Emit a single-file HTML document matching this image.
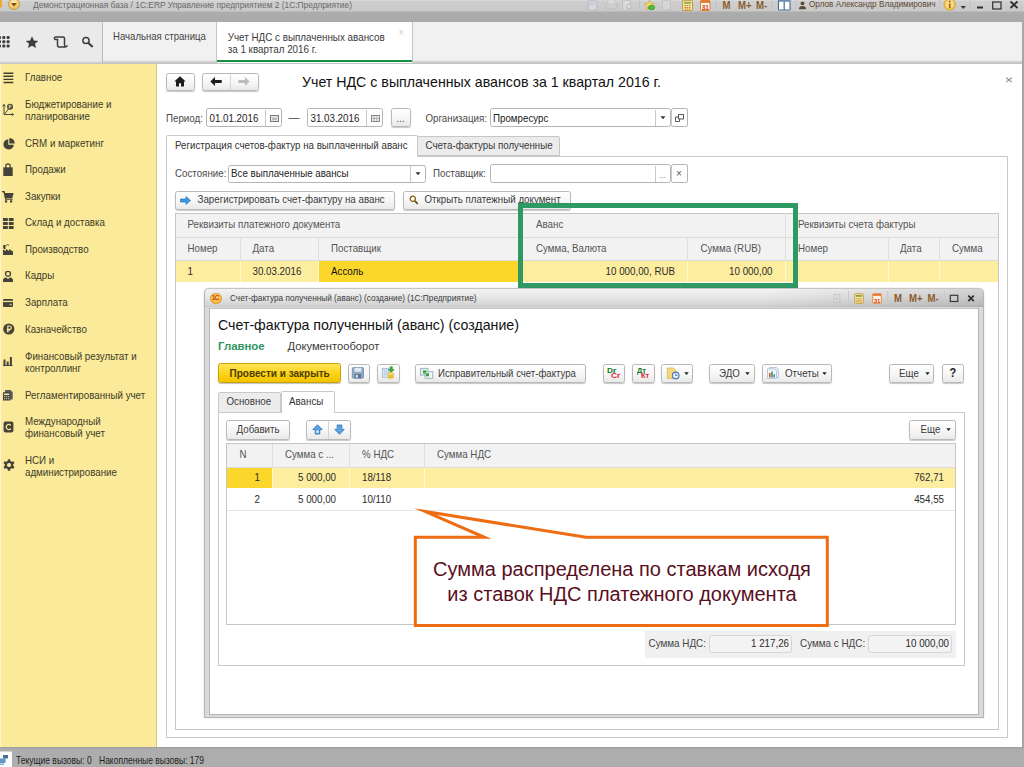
<!DOCTYPE html>
<html lang="ru"><head><meta charset="utf-8"><title>Учет НДС с выплаченных авансов</title>
<style>
*{box-sizing:border-box;margin:0;padding:0}
html,body{width:1024px;height:767px;overflow:hidden;background:#fff}
body{position:relative;font-family:"Liberation Sans",sans-serif;font-size:9.75px;color:#3a3a3a;line-height:12px}
.a{position:absolute;white-space:nowrap}
.btn{position:absolute;border:1px solid #b9b9b9;border-radius:2.5px;background:linear-gradient(#ffffff,#f6f6f6 55%,#e9e9e9);box-shadow:0 1px 1px rgba(0,0,0,.22);white-space:nowrap}
.inp{position:absolute;border:1px solid #b5b5b5;border-radius:2.5px;background:#fff;white-space:nowrap}
.hl{position:absolute;height:1px;background:#c8c8c8}
.vl{position:absolute;width:1px;background:#c8c8c8}
.nav{position:absolute;left:25px;color:#403c28;white-space:nowrap;line-height:11.400px}
.ico{position:absolute}
.th{position:absolute;color:#555;white-space:nowrap}
.td{position:absolute;color:#2a2a2a;white-space:nowrap}
.tb{font-size:8.3px;color:#5a5a5a}
.t{transform:scaleY(1.1)}
</style></head><body>

<!-- ===== window title bar ===== -->
<div class="a" id="titlebar" style="left:0;top:0;width:1024px;height:22px;background:linear-gradient(#dcdcdc 0,#cfcfcf 1.500px,#c9c9c9 10.800px,#acacac 12.300px,#aaaaaa 100%)"></div>
<div class="a" style="left:8px;top:-2px;width:12px;height:12px;border-radius:6px;background:radial-gradient(circle at 50% 35%,#fff3c4,#f5c866 60%,#d9a441);border:1px solid #c9a050"></div>
<svg class="ico" style="left:11px;top:3px" width="6" height="4"><path d="M0 0h6l-3 3.5z" fill="#8a4a10"/></svg>
<div class="a" style="left:-3px;top:-2px;width:5px;height:10px;background:#f0a830;border-radius:3px"></div>
<div class="a tb t" style="left:33px;top:-1px;font-size:8.4px;color:#6a6a6a">Демонстрационная база / 1C:ERP Управление предприятием 2  (1С:Предприятие)</div>
<!-- title bar icons -->
<svg class="ico" style="left:586px;top:0" width="90" height="12" viewBox="586 0 90 12">
<g opacity=".55"><rect x="587.500" y=".5" width="10" height="9.500" rx="1" fill="#c9cfd8" stroke="#aeb6c2"/><rect x="589.500" y="5.500" width="6" height="4" fill="#e3e6ea"/>
<rect x="606" y="3" width="11" height="6" rx="1" fill="#d0d0d0" stroke="#b4b4b4"/><rect x="608" y="0" width="7" height="4" fill="#e6e6e6" stroke="#bcbcbc" stroke-width=".6"/>
<rect x="622.500" y=".5" width="8" height="9.500" fill="#e4e4e4" stroke="#b8b8b8"/><circle cx="629" cy="6.500" r="2.300" fill="#eee" stroke="#aaa"/>
<rect x="662.500" y=".5" width="8" height="9.500" fill="#dedede" stroke="#bcbcbc"/></g>
<path d="M639.500 0v11M677 0v11" stroke="#c4c4c4" stroke-width="1"/>
<path d="M649.500 0l1.600 3.300 3.600.5-2.600 2.500.6 3.600-3.200-1.700-3.200 1.700.6-3.600-2.600-2.500 3.600-.5z" fill="#f6d66a" stroke="#c9a23a" stroke-width=".6"/>
<ellipse cx="651.500" cy="7.500" rx="3.200" ry="2.200" fill="#4cba3c" stroke="#2f8a26" stroke-width=".6"/>
</svg>
<svg class="ico" style="left:680px;top:0" width="40" height="12" viewBox="680 0 40 12">
<rect x="682.500" y=".3" width="10" height="10.200" rx=".8" fill="#f5e3a6" stroke="#c79a3a"/><rect x="684" y="1.800" width="7" height="2" fill="#8fb04a"/><path d="M684.500 5.500h6M684.500 7.500h6M684.500 9h6" stroke="#b4772a" stroke-width=".9" stroke-dasharray="1.500 .7"/>
<rect x="700.500" y=".8" width="9.500" height="9.700" rx=".8" fill="#fff6e8" stroke="#d9892a"/><rect x="700.500" y=".3" width="9.500" height="2.500" fill="#e8742a"/><text x="705.300" y="9.600" text-anchor="middle" font-family="Liberation Sans, sans-serif" font-size="6.500" font-weight="700" fill="#d23a1a">31</text>
<path d="M716 0v11" stroke="#c4c4c4" stroke-width="1"/>
</svg>
<div class="a t" style="left:722.500px;top:-.400px;font-size:9.600px;font-weight:700;color:#8b5a2b">M</div>
<div class="a t" style="left:738px;top:-.400px;font-size:9.600px;font-weight:700;color:#8b5a2b">M+</div>
<div class="a t" style="left:756px;top:-.400px;font-size:9.600px;font-weight:700;color:#8b5a2b">M-</div>
<svg class="ico" style="left:770px;top:0" width="254" height="14" viewBox="770 0 254 14">
<path d="M772 0v11M796 0v11M940 0v11M970 0v11" stroke="#c4c4c4" stroke-width="1"/>
<rect x="778.500" y=".3" width="11.500" height="9.700" rx=".8" fill="#fff" stroke="#4a6a94" stroke-width="1.100"/><path d="M784.200 .5v9.500" stroke="#4a6a94" stroke-width="1.200"/><rect x="779" y=".3" width="10.500" height="1.500" fill="#6f8fb8"/>
<circle cx="802.500" cy="3.300" r="1.900" fill="#5a4a3a"/><path d="M799 9.300q0-3.300 3.500-3.300t3.500 3.300z" fill="#5a4a3a"/>
<circle cx="949.700" cy="4.500" r="5.700" fill="#f3c44a" stroke="#c9973a" stroke-width=".8"/><circle cx="949.700" cy="4" r="4" fill="#fbe7a0" opacity=".7"/><rect x="948.900" y="3.500" width="1.700" height="4.500" fill="#a0661a"/><circle cx="949.700" cy="1.600" r="1" fill="#a0661a"/>
<path d="M960.500 6h5.500l-2.750 3z" fill="#3a3a3a"/>
<rect x="977" y="6.500" width="6" height="2" fill="#2e2e2e"/>
<rect x="992.700" y="2" width="8.300" height="7" fill="none" stroke="#3a3a3a" stroke-width="1.300"/>
<path d="M1010.500 1.500l7 6.500M1017.500 1.500l-7 6.500" stroke="#2e2e2e" stroke-width="1.800"/>
</svg>
<div class="a tb t" style="left:809px;top:-1px;font-size:8.200px;color:#5d4a33">Орлов Александр Владимирович</div>


<!-- ===== toolbar / tabs ===== -->
<div class="a" style="left:0;top:21.500px;width:1024px;height:42px;background:linear-gradient(#eaeaea 0,#eaeaea 92%,#d2d2d2 97%,#bdbdbd 100%)"></div>
<div class="a" style="left:102px;top:21.500px;width:922px;height:41.500px;background:linear-gradient(#f1f1f1 0,#f1f1f1 92%,#d6d6d6 97%,#bdbdbd 100%);border-left:1px solid #bcbcbc"></div>
<div class="a" style="left:216px;top:21.500px;width:197px;height:41px;background:#fff;border-left:1px solid #c4c4c4;border-right:1px solid #c4c4c4"></div>
<div class="a" style="left:217px;top:59.700px;width:195px;height:2.100px;background:#15913f"></div>
<div class="a t" style="left:113px;top:30.800px;font-size:9.600px;color:#454545">Начальная страница</div>
<div class="a t" style="left:227.700px;top:32.800px;font-size:9.850px;color:#3c3c3c;line-height:10.800px">Учет НДС с выплаченных авансов<br>за 1 квартал 2016 г.</div>
<div class="a t" style="left:398.500px;top:26.500px;font-size:9.500px;color:#cfcfcf">×</div>
<!-- left toolbar icons -->
<svg class="ico" style="left:0;top:34px" width="100" height="16" viewBox="0 34 100 16">
<g fill="#3c3c42"><rect x="-2" y="36" width="3" height="3" rx="1"/><rect x="2.300" y="36" width="3" height="3" rx="1"/><rect x="6.600" y="36" width="3" height="3" rx="1"/><rect x="-2" y="40.200" width="3" height="3" rx="1"/><rect x="2.300" y="40.200" width="3" height="3" rx="1"/><rect x="6.600" y="40.200" width="3" height="3" rx="1"/><rect x="-2" y="44.400" width="3" height="3" rx="1"/><rect x="2.300" y="44.400" width="3" height="3" rx="1"/><rect x="6.600" y="44.400" width="3" height="3" rx="1"/></g>
<path d="M32 36.300l1.900 4.100 4.400.5-3.300 2.900 1 4.300-4-2.300-4 2.300 1-4.300-3.300-2.900 4.400-.5z" fill="#3c3c42"/>
<path d="M55.500 37h7.500q1.500 0 1.500 1.500v6.500q0 1.700 1.300 1.700t1.300-1.500M55.500 37q-1.200 0-1.200 1.300t1.200 1.300h2v5.700q0 1.800 1.600 1.800h6.500" fill="none" stroke="#3c3c42" stroke-width="1.500"/>
<circle cx="86" cy="40.500" r="3.100" fill="none" stroke="#3c3c42" stroke-width="1.500"/><path d="M88.400 43l4.300 4" stroke="#3c3c42" stroke-width="2.100"/>
</svg>


<!-- ===== sidebar ===== -->
<div class="a" style="left:0;top:63.500px;width:157px;height:684px;background:#fbea9a;border-right:1px solid #d2c683"></div>
<div class="nav t" style="top:72.100px">Главное</div>
<div class="nav t" style="top:98.800px">Бюджетирование и<br>планирование</div>
<div class="nav t" style="top:137.800px">CRM и маркетинг</div>
<div class="nav t" style="top:164.100px">Продажи</div>
<div class="nav t" style="top:190.600px">Закупки</div>
<div class="nav t" style="top:217.400px">Склад и доставка</div>
<div class="nav t" style="top:244.000px">Производство</div>
<div class="nav t" style="top:270.200px">Кадры</div>
<div class="nav t" style="top:297.300px">Зарплата</div>
<div class="nav t" style="top:323.900px">Казначейство</div>
<div class="nav t" style="top:350.800px">Финансовый результат и<br>контроллинг</div>
<div class="nav t" style="top:389.600px">Регламентированный учет</div>
<div class="nav t" style="top:416.400px">Международный<br>финансовый учет</div>
<div class="nav t" style="top:455.000px">НСИ и<br>администрирование</div>
<div class="a" style="left:0;top:63.500px;width:1px;height:683px;background:#fdf6cf"></div>
<!-- nav icons -->
<svg class="ico" style="left:2.500px;top:71.500px" width="11" height="12" viewBox="0 0 11 12"><path d="M.5 .5h9.800v1.400H.5zM.5 3.600h9.800v1.400H.5zM.5 6.700h9.800v1.400H.5zM.5 9.800h9.800v1.400H.5z" fill="#403d2c"/></svg>
<svg class="ico" style="left:2px;top:102.500px" width="12" height="14" viewBox="0 0 12 14"><path d="M2 1.500V11.500H11.500M2 1.500 .7 3.300M2 1.500 3.300 3.300M11.500 11.500 9.800 10.300M11.500 11.500 9.800 12.700M2.500 11 6.500 6" fill="none" stroke="#48463c" stroke-width="1"/><circle cx="8" cy="3.800" r="3" fill="#48463c"/><path d="M7.200 5.500V2.300h1.100a.9.900 0 010 1.800H7.200" fill="none" stroke="#fbea99" stroke-width=".8"/></svg>
<svg class="ico" style="left:2.500px;top:137.500px" width="12" height="12" viewBox="0 0 12 12"><path d="M5.300 1.200A5.200 5.200 0 1 0 10.800 6.700H5.300z" fill="#44423a"/><path d="M6.400 0A5.300 5.300 0 0 1 11.700 5.500H6.400z" fill="#44423a"/></svg>
<svg class="ico" style="left:3px;top:162.500px" width="10" height="13" viewBox="0 0 10 13"><path d="M.3 4.300h9.400V13H.3z" fill="#44423a"/><path d="M2.800 5V3a2.200 2.200 0 0 1 4.400 0V5" fill="none" stroke="#44423a" stroke-width="1.200"/></svg>
<svg class="ico" style="left:2px;top:190.500px" width="12" height="12" viewBox="0 0 12 12"><path d="M0 .6h2l.6 1.500h9L10.300 7H3.300L2 1.700" fill="#44423a"/><path d="M0 .7h2.100l1.500 7.500h7" fill="none" stroke="#44423a" stroke-width="1.200"/><rect x="3" y="9.300" width="2.200" height="2.200" fill="#44423a"/><rect x="8" y="9.300" width="2.200" height="2.200" fill="#44423a"/></svg>
<svg class="ico" style="left:2.500px;top:217.500px" width="11" height="11" viewBox="0 0 11 11"><path d="M0 0h4.800v3H0zM5.800 0h4.800v3H5.800zM0 4h4.800v3H0zM5.800 4h4.800v3H5.800zM0 8h4.800v3H0zM5.800 8h4.800v3H5.800z" fill="#44423a"/></svg>
<svg class="ico" style="left:3px;top:243.500px" width="10" height="11" viewBox="0 0 10 11"><path d="M0 11V5.500L3 7V5l3 2V5l4 2.500V11z" fill="#44423a"/><path d="M.2 4.500V1h2.300v4.500z" fill="#44423a"/><path d="M3 2 4.500.3 6 1.500" fill="none" stroke="#44423a" stroke-width=".9"/></svg>
<svg class="ico" style="left:3px;top:271px" width="10" height="11" viewBox="0 0 10 11"><circle cx="5" cy="2.800" r="2.500" fill="none" stroke="#44423a" stroke-width="1.300"/><path d="M0 11V9.500Q0 6.800 3 6.500L5 8 7 6.500Q10 6.800 10 9.500V11z" fill="#44423a"/></svg>
<svg class="ico" style="left:3px;top:298.500px" width="10" height="8" viewBox="0 0 10 8"><rect x="0" y="0" width="10" height="8" rx="1" fill="#44423a"/><rect x="0" y="1.800" width="10" height="1.300" fill="#fbea99"/><rect x="6.500" y="4.800" width="2.300" height="1.500" fill="#fbea99" opacity=".7"/></svg>
<svg class="ico" style="left:2.500px;top:322.500px" width="12" height="12" viewBox="0 0 12 12"><circle cx="5.800" cy="6" r="5.600" fill="#44423a"/><path d="M4.800 9.500V3h1.800a1.700 1.700 0 010 3.400H3.800M3.800 7.800h3" fill="none" stroke="#fbea99" stroke-width="1.100"/></svg>
<svg class="ico" style="left:3px;top:356.300px" width="10" height="10" viewBox="0 0 10 10"><path d="M0 9h9.500v1H0zM.5 3.500h2V9h-2zM3.700 5.500h2V9h-2zM6.900 1h2v8h-2z" fill="#44423a"/></svg>
<svg class="ico" style="left:3px;top:389.500px" width="10" height="11" viewBox="0 0 10 11"><path d="M2 0h5.500L9.700 2.200v7.300H2z" fill="#5a5a60"/><path d="M0 2.300h7.300v8.200H0z" fill="#3f3f45"/><path d="M1 3.500h5.300v1.600H1z" fill="#fbea99"/><path d="M1 6.300h1.300v1H1zM3 6.300h1.300v1H3zM5 6.300h1.300v1H5zM1 8.300h1.300v1H1zM3 8.300h1.300v1H3zM5 8.300h1.300v1H5z" fill="#fbea99" opacity=".85"/></svg>
<svg class="ico" style="left:2.500px;top:421px" width="11" height="12" viewBox="0 0 11 12"><rect x=".6" y=".6" width="9.800" height="10.800" rx="1.800" fill="#44423a"/><path d="M7.800 4.300A2.600 2.600 0 1 0 7.800 7.700" fill="none" stroke="#fbea99" stroke-width="1.300"/></svg>
<svg class="ico" style="left:2.500px;top:459.300px" width="12" height="12" viewBox="0 0 12 12"><g fill="#44423a"><circle cx="6" cy="6" r="4.300"/><rect x="4.800" y=".3" width="2.400" height="11.400" rx=".5"/><rect x="4.800" y=".3" width="2.400" height="11.400" rx=".5" transform="rotate(60 6 6)"/><rect x="4.800" y=".3" width="2.400" height="11.400" rx=".5" transform="rotate(120 6 6)"/></g><circle cx="6" cy="6" r="2.100" fill="#fbea99"/></svg>


<!-- ===== content frame ===== -->
<div class="a" style="left:157px;top:63.500px;width:865px;height:684px;background:#fff"></div>
<div class="a" style="left:1022px;top:21px;width:2px;height:746px;background:#a6a6a6"></div>

<!-- ===== main form ===== -->
<div class="btn" style="left:166px;top:72.5px;width:28.5px;height:18.5px"></div>
<svg class="ico" style="left:174px;top:76px" width="12" height="11" viewBox="0 0 12 11"><path d="M6 0.3 0.3 5.6h1.7v5h3V7.3h2v3.3h3v-5h1.7z" fill="#1c1c1c"/></svg>
<div class="btn" style="left:202px;top:72.5px;width:56.5px;height:18.5px"></div>
<div class="vl" style="left:230px;top:73.5px;height:16.5px;background:#d4d4d4"></div>
<svg class="ico" style="left:210px;top:77px" width="12" height="9" viewBox="0 0 12 9"><path d="M5 0 0.3 4.5 5 9V6h6.7V3H5z" fill="#1c1c1c"/></svg>
<svg class="ico" style="left:238px;top:77px" width="12" height="9" viewBox="0 0 12 9"><path d="M7 0 11.7 4.5 7 9V6H0.3V3H7z" fill="#bdbdbd"/></svg>
<div class="a" style="left:302px;top:74.300px;font-size:14.200px;line-height:17px;color:#111">Учет НДС с выплаченных авансов за 1 квартал 2016 г.</div>
<svg class="ico" style="left:1005px;top:76px" width="8" height="8" viewBox="0 0 8 8"><path d="M1.200 1.700l5.600 4.400M6.800 1.700l-5.600 4.400" stroke="#8e8e8e" stroke-width="1.100"/></svg>

<div class="a t" style="left:166px;top:112.5px;color:#4a4a4a">Период:</div>
<div class="inp" style="left:206px;top:108.300px;width:75.500px;height:19.200px"></div>
<div class="vl" style="left:265px;top:109.5px;height:16.5px"></div>
<div class="a t" style="left:209.5px;top:112.5px;color:#222">01.01.2016</div>
<svg class="ico" style="left:269.5px;top:115px" width="9" height="7" viewBox="0 0 9 7"><rect x=".5" y=".5" width="8" height="6" fill="#e6e6e6" stroke="#777"/><rect x="2" y="2.5" width="5" height="2.5" fill="#bbb"/></svg>
<div class="a t" style="left:288.5px;top:112px;color:#666;font-size:11px">—</div>
<div class="inp" style="left:307px;top:108.300px;width:75.500px;height:19.200px"></div>
<div class="vl" style="left:366px;top:109.5px;height:16.5px"></div>
<div class="a t" style="left:310.5px;top:112.5px;color:#222">31.03.2016</div>
<svg class="ico" style="left:370.5px;top:115px" width="9" height="7" viewBox="0 0 9 7"><rect x=".5" y=".5" width="8" height="6" fill="#f1f1f1" stroke="#888"/><path d="M3.2 1v5M5.8 1v5M1 3.5h7" stroke="#999" stroke-width=".7"/></svg>
<div class="btn" style="left:390.500px;top:108.200px;width:20px;height:18.800px"></div>
<div class="a t" style="left:396.5px;top:113px;color:#444">...</div>
<div class="a t" style="left:425.5px;top:112.5px;color:#4a4a4a">Организация:</div>
<div class="inp" style="left:489.5px;top:108.300px;width:181.500px;height:19.200px"></div>
<div class="vl" style="left:654.5px;top:109.5px;height:16.5px"></div>
<div class="a t" style="left:493px;top:112.5px;color:#222">Промресурс</div>
<svg class="ico" style="left:660px;top:116px" width="6" height="4"><path d="M.5 .3h5l-2.500 3z" fill="#333"/></svg>
<div class="inp" style="left:670.5px;top:108.300px;width:17px;height:19.200px;border-left-color:#c8c8c8"></div>
<svg class="ico" style="left:675px;top:114px" width="9" height="8" viewBox="0 0 9 8"><path d="M3.500.500h5v4.500h-5zM3.500 3h-3v4.500h4v-2.500" fill="none" stroke="#555" stroke-width="1"/></svg>

<!-- tab panel -->
<div class="a" style="left:166px;top:155.5px;width:842px;height:582px;border:1px solid #c9c9c9;background:#fff"></div>
<div class="a" style="left:417px;top:135.5px;width:143px;height:20.5px;border:1px solid #c6c6c6;border-radius:2px 2px 0 0;background:#ececec"></div>
<div class="a" style="left:166px;top:135px;width:251.5px;height:22px;border:1px solid #c9c9c9;border-bottom:none;border-radius:2px 2px 0 0;background:#fff"></div>
<div class="a t" style="left:175px;top:140.200px;color:#333">Регистрация счетов-фактур на выплаченный аванс</div>
<div class="a t" style="left:425.5px;top:140.200px;color:#3a3a3a">Счета-фактуры полученные</div>

<div class="a t" style="left:175px;top:167.500px;color:#4a4a4a">Состояние:</div>
<div class="inp" style="left:227.5px;top:164.5px;width:198px;height:18.5px"></div>
<div class="vl" style="left:409.5px;top:165.5px;height:16.5px"></div>
<div class="a t" style="left:231px;top:167.500px;color:#222">Все выплаченные авансы</div>
<svg class="ico" style="left:414.500px;top:172px" width="6" height="4"><path d="M.5 .3h5l-2.500 3z" fill="#333"/></svg>
<div class="a t" style="left:433px;top:167.500px;color:#4a4a4a">Поставщик:</div>
<div class="inp" style="left:489.5px;top:164px;width:181.500px;height:19px"></div>
<div class="vl" style="left:654.5px;top:165.5px;height:16.5px"></div>
<div class="a t" style="left:659px;top:169.500px;color:#888;font-size:8px">...</div>
<div class="inp" style="left:670.5px;top:164px;width:17px;height:19px;border-left-color:#c8c8c8"></div>
<div class="a t" style="left:676px;top:168px;color:#555;font-size:10px">×</div>

<div class="btn" style="left:175px;top:190.500px;width:220px;height:19px"></div>
<svg class="ico" style="left:179.500px;top:195.500px" width="11" height="9" viewBox="0 0 11 9"><path d="M0.500 3h5.500V0.600L10.500 4.500 6 8.400V6H0.500z" fill="#3d9be0" stroke="#1d6fb5" stroke-width=".7"/></svg>
<div class="a t" style="left:197.500px;top:193.500px;color:#3a3a3a">Зарегистрировать счет-фактуру на аванс</div>
<div class="btn" style="left:402.500px;top:190.500px;width:168.500px;height:19px"></div>
<svg class="ico" style="left:408.500px;top:195px" width="10" height="10" viewBox="0 0 10 10"><circle cx="3.800" cy="3.800" r="2.600" fill="#fff" stroke="#8a5a18" stroke-width="1.300"/><path d="M5.800 5.800 8.800 8.800" stroke="#6a4a1a" stroke-width="1.700"/></svg>
<div class="a t" style="left:424.500px;top:193.500px;color:#3a3a3a">Открыть платежный документ</div>

<!-- main table -->
<div class="a" style="left:175px;top:212.500px;width:824px;height:517px;border:1px solid #c6c6c6;background:#fff"></div>
<div class="a" style="left:176px;top:213.500px;width:822px;height:47px;background:#f2f2f2"></div>
<div class="hl" style="left:176px;top:237px;width:822px;background:#dcdcdc"></div>
<div class="hl" style="left:176px;top:260px;width:822px;background:#dcdcdc"></div>
<div class="a" style="left:176px;top:261px;width:822px;height:20.500px;background:#fdee9f"></div>
<div class="a" style="left:319px;top:261px;width:204px;height:20.500px;background:#fbd72b"></div>
<div class="vl" style="left:240px;top:237px;height:24px;background:#dedede"></div><div class="vl" style="left:240px;top:261px;height:20.500px;background:#fef7cf"></div>
<div class="vl" style="left:318px;top:237px;height:24px;background:#dedede"></div><div class="vl" style="left:318px;top:261px;height:20.500px;background:#fef7cf"></div>
<div class="vl" style="left:687px;top:237px;height:24px;background:#dedede"></div><div class="vl" style="left:687px;top:261px;height:20.500px;background:#fef7cf"></div>
<div class="vl" style="left:785px;top:213px;height:48px;background:#dedede"></div><div class="vl" style="left:785px;top:261px;height:20.500px;background:#fef7cf"></div>
<div class="vl" style="left:887.500px;top:237px;height:24px;background:#dedede"></div><div class="vl" style="left:887.500px;top:261px;height:20.500px;background:#fef7cf"></div>
<div class="vl" style="left:939px;top:237px;height:24px;background:#dedede"></div><div class="vl" style="left:939px;top:261px;height:20.500px;background:#fef7cf"></div>
<div class="th t" style="left:187.500px;top:219px">Реквизиты платежного документа</div>
<div class="th t" style="left:536px;top:219px">Аванс</div>
<div class="th t" style="left:798px;top:219px">Реквизиты счета фактуры</div>
<div class="th t" style="left:187.500px;top:243px">Номер</div>
<div class="th t" style="left:252.500px;top:243px">Дата</div>
<div class="th t" style="left:331px;top:243px">Поставщик</div>
<div class="th t" style="left:536px;top:243px">Сумма, Валюта</div>
<div class="th t" style="left:700.500px;top:243px">Сумма (RUB)</div>
<div class="th t" style="left:798px;top:243px">Номер</div>
<div class="th t" style="left:900px;top:243px">Дата</div>
<div class="th t" style="left:952px;top:243px">Сумма</div>
<div class="td t" style="left:187.500px;top:265.500px">1</div>
<div class="td t" style="left:252.500px;top:265.500px">30.03.2016</div>
<div class="td t" style="left:331px;top:265.500px;color:#111">Ассоль</div>
<div class="td t" style="right:349px;top:265.500px">10 000,00, RUB</div>
<div class="td t" style="right:251.500px;top:265.500px">10 000,00</div>
<!-- green highlight -->
<div class="a" style="left:517.700px;top:203px;width:280.500px;height:85.300px;border:5px solid #2f9964"></div>

<!--MAINEND-->

<!-- ===== modal window ===== -->
<div class="a" style="left:204px;top:288.200px;width:780px;height:429.800px;border-radius:5px 5px 0 0;background:#dadada;border:1px solid #b4b4b4;border-top-color:#c4c4c4;box-shadow:0 0 2px rgba(0,0,0,.15)"></div>
<div class="a" style="left:205px;top:289.200px;width:778px;height:18.300px;border-radius:4px 4px 0 0;background:linear-gradient(90deg,rgba(0,0,0,0) 0,rgba(0,0,0,0) 72%,rgba(0,0,0,.13) 100%),linear-gradient(#f3f3f3,#e6e6e6 45%,#d3d3d3 90%,#c6c6c6)"></div>
<div class="a" style="left:208.500px;top:307.500px;width:770.500px;height:407px;background:#fff;border:1px solid #b6b6b6;border-top-color:#c2c2c2"></div>
<div class="a" style="left:210px;top:292.500px;width:11.500px;height:11px;border-radius:6px;background:radial-gradient(circle at 45% 35%,#ffe27a,#f7b733 70%,#e09a20);border:.5px solid #d89a28"></div>
<div class="a t" style="left:212px;top:294px;font-size:6px;font-weight:700;color:#d0261c;line-height:8px;letter-spacing:-.5px">1C</div>
<div class="a tb t" style="left:230px;top:292.500px;color:#3c3c3c;font-size:8.250px">Счет-фактура полученный (аванс) (создание)  (1С:Предприятие)</div>
<!-- modal title icons -->
<svg class="ico" style="left:830px;top:290px" width="152" height="17" viewBox="830 290 152 17">
<g opacity=".5"><rect x="834" y="294.500" width="6" height="8" fill="#dcdcdc" stroke="#aaa" stroke-width=".8"/><path d="M835.500 299h3M837 297.500v3" stroke="#aaa" stroke-width=".8"/></g>
<path d="M848.500 291v14M887.500 291v14M944.500 291v14" stroke="#c9c9c9" stroke-width="1"/>
<rect x="854.700" y="293.700" width="8.600" height="9.600" rx=".8" fill="#f5e3a6" stroke="#c79a3a" stroke-width=".9"/><rect x="856" y="295" width="6" height="1.800" fill="#7fa84a"/><path d="M856.300 298.700h5.400M856.300 300.300h5.400M856.300 301.800h5.400" stroke="#b4772a" stroke-width=".8" stroke-dasharray="1.300 .7"/>
<rect x="872.700" y="294.300" width="8.600" height="9" rx=".8" fill="#fff3e0" stroke="#d9892a" stroke-width=".9"/><rect x="872.700" y="293.500" width="8.600" height="2.300" fill="#e8742a"/><text x="877" y="302.500" text-anchor="middle" font-family="Liberation Sans, sans-serif" font-size="6" font-weight="700" fill="#d23a1a">31</text>
<rect x="950.300" y="295.300" width="7.500" height="6.200" fill="none" stroke="#3a3a3a" stroke-width="1.200"/>
<path d="M968.300 295.700l5.500 5.500M973.800 295.700l-5.500 5.500" stroke="#2e2e2e" stroke-width="1.700"/>
</svg>
<div class="a t" style="left:894px;top:292.500px;font-size:9.600px;font-weight:700;color:#8b5a2b">M</div>
<div class="a t" style="left:909px;top:292.500px;font-size:9.600px;font-weight:700;color:#8b5a2b">M+</div>
<div class="a t" style="left:927.500px;top:292.500px;font-size:9.600px;font-weight:700;color:#8b5a2b">M-</div>


<div class="a" style="left:218px;top:316.700px;font-size:14.200px;line-height:17px;color:#111">Счет-фактура полученный (аванс) (создание)</div>
<div class="a" style="left:218px;top:339.500px;font-size:11.400px;line-height:13px;font-weight:700;color:#2f9663">Главное</div>
<div class="a" style="left:287.500px;top:339.500px;font-size:11.200px;line-height:13px;color:#3a3a3a">Документооборот</div>

<div class="a" style="left:218px;top:363px;width:122.500px;height:20px;border:1px solid #c9a20a;border-radius:2.500px;background:linear-gradient(#ffe45a,#fbd10f 60%,#f3c400);box-shadow:0 1px 1px rgba(0,0,0,.25)"></div>
<div class="a t" style="left:229.500px;top:368px;font-size:10px;font-weight:700;color:#4d3b00">Провести и закрыть</div>
<div class="btn" style="left:347.500px;top:363.500px;width:22px;height:19.500px"></div>
<div class="btn" style="left:377px;top:363.500px;width:22.500px;height:19.500px"></div>
<div class="btn" style="left:415px;top:363.500px;width:171px;height:19.500px"></div>
<div class="a t" style="left:438px;top:367.500px;color:#3a3a3a;font-size:9.600px">Исправительный счет-фактура</div>
<div class="btn" style="left:602.500px;top:363.500px;width:22px;height:19.500px"></div>
<div class="a" style="left:607px;top:367.700px;font-size:6.500px;line-height:6px;font-weight:700;color:#157a1f;transform:scale(1.3,1);transform-origin:0 0">Dr</div>
<div class="a" style="left:610.500px;top:373.400px;font-size:6.500px;line-height:6px;font-weight:700;color:#e3263a;transform:scale(1.3,1);transform-origin:0 0">Cr</div>
<div class="btn" style="left:632px;top:363.500px;width:22.500px;height:19.500px"></div>
<div class="a" style="left:637.300px;top:367.700px;font-size:6.500px;line-height:6px;font-weight:700;color:#157a1f;transform:scale(1.150,1);transform-origin:0 0">Дт</div>
<div class="a" style="left:640.500px;top:373.400px;font-size:6.500px;line-height:6px;font-weight:700;color:#e3263a;transform:scale(1.150,1);transform-origin:0 0">Кт</div>
<div class="btn" style="left:661px;top:363.500px;width:32px;height:19.500px"></div>
<svg class="ico" style="left:683.500px;top:371.500px" width="5" height="3.500"><path d="M.3 .3h4.400l-2.200 2.600z" fill="#222"/></svg>
<div class="btn" style="left:708.500px;top:363.500px;width:46.500px;height:19.500px"></div>
<div class="a t" style="left:719px;top:367.500px;color:#3a3a3a">ЭДО</div>
<svg class="ico" style="left:745px;top:371.500px" width="5" height="3.500"><path d="M.3 .3h4.400l-2.200 2.600z" fill="#222"/></svg>
<div class="btn" style="left:762px;top:363.500px;width:69.500px;height:19.500px"></div>
<div class="a t" style="left:785px;top:367.500px;color:#3a3a3a">Отчеты</div>
<svg class="ico" style="left:822px;top:371.500px" width="5" height="3.500"><path d="M.3 .3h4.400l-2.200 2.600z" fill="#222"/></svg>
<div class="btn" style="left:888.500px;top:363.500px;width:45.500px;height:19.500px"></div>
<div class="a t" style="left:899px;top:367.500px;color:#3a3a3a">Еще</div>
<svg class="ico" style="left:924.500px;top:371.500px" width="5" height="3.500"><path d="M.3 .3h4.400l-2.200 2.600z" fill="#222"/></svg>
<div class="btn" style="left:941.500px;top:363.500px;width:22.500px;height:19.500px"></div>
<div class="a t" style="left:949.500px;top:366.500px;font-size:11px;font-weight:700;color:#222;line-height:13px">?</div>

<!-- modal tabs -->
<div class="a" style="left:218px;top:412px;width:746.500px;height:253.500px;border:1px solid #c9c9c9;background:#fff"></div>
<div class="a" style="left:218px;top:391.500px;width:63px;height:21px;border:1px solid #c9c9c9;border-radius:2px 2px 0 0;background:#ececec"></div>
<div class="a" style="left:280.500px;top:390.500px;width:54px;height:22.500px;border:1px solid #c9c9c9;border-bottom:none;border-radius:2px 2px 0 0;background:#fff"></div>
<div class="a t" style="left:226.500px;top:395.500px;color:#3a3a3a">Основное</div>
<div class="a t" style="left:289px;top:395.500px;color:#333">Авансы</div>

<div class="btn" style="left:226px;top:419.500px;width:63.500px;height:20px"></div>
<div class="a t" style="left:236.500px;top:423.500px;color:#3a3a3a">Добавить</div>
<div class="btn" style="left:305.500px;top:419.500px;width:45px;height:20px"></div>
<div class="vl" style="left:328px;top:420.500px;height:18px;background:#d4d4d4"></div>
<svg class="ico" style="left:311.500px;top:424px" width="11" height="11" viewBox="0 0 11 11"><path d="M5.500.800 10.200 5.600H7.800V10H3.200V5.600H.8z" fill="#5aa5e6" stroke="#2a6db3" stroke-width=".8"/><rect x="4.300" y="6.500" width="2.400" height="2.400" fill="#dff0ff"/></svg>
<svg class="ico" style="left:334px;top:424px" width="11" height="11" viewBox="0 0 11 11"><path d="M5.500 10.200 10.200 5.400H7.800V1H3.200V5.400H.8z" fill="#5aa5e6" stroke="#2a6db3" stroke-width=".8"/></svg>
<div class="btn" style="left:909px;top:419.500px;width:46.500px;height:20px"></div>
<div class="a t" style="left:920.500px;top:423.500px;color:#3a3a3a">Еще</div>
<svg class="ico" style="left:945.500px;top:428px" width="5" height="3.500"><path d="M.3 .3h4.400l-2.200 2.600z" fill="#222"/></svg>

<!-- modal table -->
<div class="a" style="left:226px;top:442.500px;width:730px;height:182px;border:1px solid #c6c6c6;background:#fff"></div>
<div class="a" style="left:227px;top:443.500px;width:728px;height:23.500px;background:#f2f2f2"></div>
<div class="hl" style="left:227px;top:466.500px;width:728px;background:#dcdcdc"></div>
<div class="a" style="left:227px;top:467.500px;width:728px;height:20.500px;background:#fdee9f"></div>
<div class="a" style="left:227px;top:467.500px;width:45px;height:20.500px;background:#fbd72b"></div>
<div class="hl" style="left:227px;top:510px;width:728px;background:#e6e6e6"></div>
<div class="vl" style="left:272px;top:443.500px;height:23.500px;background:#dedede"></div><div class="vl" style="left:272px;top:467.500px;height:20.500px;background:#fef7cf"></div>
<div class="vl" style="left:348.500px;top:443.500px;height:23.500px;background:#dedede"></div><div class="vl" style="left:348.500px;top:467.500px;height:20.500px;background:#fef7cf"></div>
<div class="vl" style="left:424px;top:443.500px;height:23.500px;background:#dedede"></div><div class="vl" style="left:424px;top:467.500px;height:20.500px;background:#fef7cf"></div>
<div class="th t" style="left:239.500px;top:449.200px">N</div>
<div class="th t" style="left:285px;top:449.200px">Сумма с ...</div>
<div class="th t" style="left:362px;top:449.200px">% НДС</div>
<div class="th t" style="left:437px;top:449.200px">Сумма НДС</div>
<div class="td t" style="right:764px;top:472px">1</div>
<div class="td t" style="right:688px;top:472px">5 000,00</div>
<div class="td t" style="left:362px;top:472px">18/118</div>
<div class="td t" style="right:80px;top:472px">762,71</div>
<div class="td t" style="right:764px;top:494px">2</div>
<div class="td t" style="right:688px;top:494px">5 000,00</div>
<div class="td t" style="left:362px;top:494px">10/110</div>
<div class="td t" style="right:80px;top:494px">454,55</div>

<!-- footer totals -->
<div class="a" style="left:645px;top:631px;width:310.500px;height:26.500px;background:#f0f0f0"></div>
<div class="a t" style="left:648.500px;top:638px;color:#444;font-size:9.900px">Сумма НДС:</div>
<div class="a" style="left:708.500px;top:634.500px;width:83.500px;height:18.500px;border:1px solid #d6d6d6;border-radius:2.500px;background:#f3f3f3"></div>
<div class="td t" style="right:235px;top:638px">1 217,26</div>
<div class="a t" style="left:800px;top:638px;color:#444;font-size:9.900px">Сумма с НДС:</div>
<div class="a" style="left:868px;top:634.500px;width:84px;height:18.500px;border:1px solid #d6d6d6;border-radius:2.500px;background:#f3f3f3"></div>
<div class="td t" style="right:75px;top:638px">10 000,00</div>

<!-- callout -->
<svg class="ico" style="left:400px;top:500px" width="440" height="135" viewBox="400 500 440 135">
<path d="M425.500 511.600 L586 537.300 H827.300 V625.500 H415.300 V537.300 H484.500 Z" fill="#fff" stroke="#ee6c12" stroke-width="3" stroke-linejoin="miter" stroke-miterlimit="40"/>
<text x="622" y="575.500" text-anchor="middle" font-family="Liberation Sans, sans-serif" font-size="20" fill="#5a0f1e">Сумма распределена по ставкам исходя</text>
<text x="622" y="601" text-anchor="middle" font-family="Liberation Sans, sans-serif" font-size="20" fill="#5a0f1e">из ставок НДС платежного документа</text>
</svg>

<!-- modal toolbar icons -->
<svg class="ico" style="left:350px;top:365px" width="90" height="16" viewBox="350 365 90 16">
<rect x="352.300" y="367.500" width="11.200" height="10.800" rx="1.200" fill="#8ea8c4" stroke="#6f8cab" stroke-width=".8"/><rect x="354.500" y="367.800" width="6.800" height="4" fill="#dfe8f2"/><rect x="354.800" y="374" width="6.200" height="4.200" fill="#5f7891"/><rect x="356" y="375" width="1.800" height="2.600" fill="#e8eef5"/>
<rect x="382.300" y="368.300" width="6.500" height="9" fill="#d6e6f7" stroke="#9db7d6" stroke-width=".8"/><path d="M384 371h3M384 373h3M384 375h2" stroke="#9db7d6" stroke-width=".6"/>
<path d="M390 366.800h2.400v2.700h1.800l-3 3-3-3h1.800z" fill="#3cae3c" stroke="#23802a" stroke-width=".5"/>
<path d="M387.500 374v3.200q0 1.500 3.200 1.500t3.200-1.500V374z" fill="#e9c23a"/><ellipse cx="390.700" cy="374" rx="3.200" ry="1.500" fill="#f7df7a" stroke="#cfa52a" stroke-width=".5"/>
<rect x="420.500" y="368.300" width="7.500" height="6.800" fill="#e4efe6" stroke="#8aa6bf" stroke-width=".8"/><rect x="425" y="371.800" width="7.800" height="6.500" fill="#f1f7f2" stroke="#8aa6bf" stroke-width=".8"/><rect x="423" y="370.300" width="3.200" height="3.200" fill="#4aa657"/><rect x="426" y="373.300" width="3" height="3" fill="#3a9a4a"/>
</svg>
<svg class="ico" style="left:665px;top:366px" width="16" height="14" viewBox="665 366 16 14">
<path d="M667.300 368h6l2.500 2.500v8h-8.500z" fill="#f3d97c" stroke="#d3b04a" stroke-width=".7"/><circle cx="675.700" cy="375.400" r="3.300" fill="#e8f0fb" stroke="#4a78b8" stroke-width="1.200"/><path d="M675.700 373.500v2h1.600" fill="none" stroke="#33558a" stroke-width=".8"/>
</svg>
<svg class="ico" style="left:766px;top:366px" width="15" height="14" viewBox="766 366 15 14">
<path d="M769.500 367.500h7l2 2v8h-9z" fill="#e8eef6" stroke="#9fb3cc" stroke-width=".7"/><path d="M767.500 369h7l2 2v7.500h-9z" fill="#f6f9fc" stroke="#9fb3cc" stroke-width=".7"/><rect x="769" y="373" width="1.600" height="4.500" fill="#d84a3a"/><rect x="771.200" y="371.500" width="1.600" height="6" fill="#3a9a4a"/><rect x="773.400" y="374.300" width="1.600" height="3.200" fill="#4a7ac8"/>
</svg>
<!--MODALEND-->

<!-- ===== status bar ===== -->
<div class="a" style="left:0;top:746.500px;width:1024px;height:20.500px;background:linear-gradient(#9c9c9c 0,#adadad 2px,#adadad 100%)"></div>
<div class="a" style="left:16px;top:754.300px;font-size:9.300px;color:#1e1e1e;transform:scale(.915,1.1);transform-origin:0 0">Текущие вызовы: 0</div>
<div class="a" style="left:99px;top:754.300px;font-size:9.300px;color:#1e1e1e;transform:scale(.915,1.1);transform-origin:0 0">Накопленные вызовы: 179</div>
<svg class="ico" style="left:0;top:750px" width="13" height="17" viewBox="0 750 13 17"><rect x="0" y="751.500" width="12" height="16" fill="#fbfbfb"/><rect x="3" y="755" width="5" height="3.500" fill="#4a6f94"/><rect x="-1" y="758.500" width="6.500" height="4.500" rx=".8" fill="#5f97c4"/><rect x="0" y="763.500" width="4" height="1.500" fill="#7fb0d4"/></svg>

</body></html>
